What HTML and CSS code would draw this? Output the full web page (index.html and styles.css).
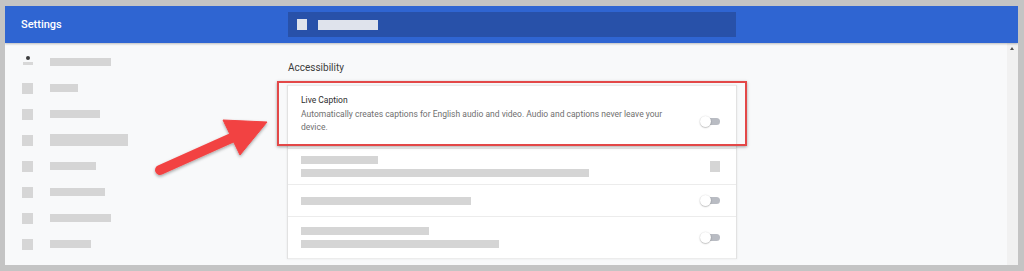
FILE: index.html
```html
<!DOCTYPE html>
<html>
<head>
<meta charset="utf-8">
<link rel="stylesheet" href="styles.css">
</head>
<body>
<div class="app">
  <header class="topbar">
    <div class="brand">Settings</div>
    <div class="search">
      <span class="search-icon"></span>
      <span class="search-ph"></span>
    </div>
  </header>
  <div class="body">
    <div class="content">
      <nav class="sidebar">
        <div class="nav-row"><span class="nav-icon person"><span class="head"></span><span class="shoulders"></span></span><span class="bar" style="width:61px"></span></div>
        <div class="nav-row"><span class="nav-icon"></span><span class="bar" style="width:28px"></span></div>
        <div class="nav-row"><span class="nav-icon"></span><span class="bar" style="width:50px"></span></div>
        <div class="nav-row"><span class="nav-icon"></span><span class="bar tall" style="width:78px"></span></div>
        <div class="nav-row"><span class="nav-icon"></span><span class="bar" style="width:46px"></span></div>
        <div class="nav-row"><span class="nav-icon"></span><span class="bar" style="width:55px"></span></div>
        <div class="nav-row"><span class="nav-icon"></span><span class="bar" style="width:61px"></span></div>
        <div class="nav-row"><span class="nav-icon"></span><span class="bar" style="width:41px"></span></div>
      </nav>
      <main class="main">
        <h2 class="section-title">Accessibility</h2>
        <div class="card">
          <div class="row row-caption">
            <div class="row-text">
              <div class="row-title">Live Caption</div>
              <div class="row-desc">Automatically creates captions for English audio and video. Audio and captions never leave your device.</div>
            </div>
            <span class="toggle"><span class="knob"></span></span>
          </div>
          <div class="row row-2">
            <div class="bars">
              <span class="bar" style="width:77px"></span>
              <span class="bar" style="width:288px"></span>
            </div>
            <span class="square"></span>
          </div>
          <div class="row row-3">
            <div class="bars">
              <span class="bar" style="width:170px"></span>
            </div>
            <span class="toggle"><span class="knob"></span></span>
          </div>
          <div class="row row-4">
            <div class="bars">
              <span class="bar" style="width:128px"></span>
              <span class="bar" style="width:198px"></span>
            </div>
            <span class="toggle"><span class="knob"></span></span>
          </div>
        </div>
      </main>
    </div>
    <div class="scrollbar"><span class="scroll-arrow"></span></div>
  </div>
  <div class="highlight"></div>
  <svg class="arrow" width="140" height="96" viewBox="0 0 140 96">
    <defs>
      <filter id="sh" x="-20%" y="-20%" width="140%" height="140%">
        <feDropShadow dx="0" dy="1.5" stdDeviation="1.5" flood-color="#000" flood-opacity="0.35"/>
      </filter>
    </defs>
    <g filter="url(#sh)" fill="#f24343" stroke="#f24343">
      <line x1="20" y1="70" x2="96" y2="36" stroke-width="10" stroke-linecap="round"/>
      <polygon points="83,20 127,22 100,55" stroke-width="1" stroke-linejoin="round"/>
    </g>
  </svg>
</div>
</body>
</html>
```

FILE: styles.css
```css
html, body {
  margin: 0;
  padding: 0;
}
body {
  background: #c4c4c4;
  font-family: Roboto, "Noto Sans", "Liberation Sans", sans-serif;
  width: 1024px;
  height: 271px;
  overflow: hidden;
}
.app {
  position: relative;
  margin: 6px 6px 0 5px;
  width: 1013px;
  height: 259px;
  display: flex;
  flex-direction: column;
  background: #f8f9fa;
  overflow: hidden;
}
.topbar {
  height: 37px;
  flex: none;
  background: #2f65d2;
  display: flex;
  align-items: center;
  box-shadow: 0 1px 2px rgba(0,0,0,0.25);
  position: relative;
  z-index: 1;
}
.brand {
  width: 266px;
  padding-left: 16px;
  color: #fff;
  font-size: 11px;
  font-weight: 500;
}
.search {
  width: 448px;
  height: 25px;
  margin-left: 1px;
  background: #2851a9;
  display: flex;
  align-items: center;
  padding-left: 9px;
  box-sizing: border-box;
  gap: 11px;
}
.search-icon {
  width: 10px;
  height: 11px;
  background: #dfe3ec;
}
.search-ph {
  width: 60px;
  height: 10px;
  background: #dfe3ec;
}
.body {
  flex: 1;
  display: flex;
}
.content {
  flex: 1;
  display: flex;
}
.sidebar {
  width: 282px;
  padding-top: 6px;
  padding-left: 17px;
  box-sizing: border-box;
}
.nav-row {
  height: 26px;
  display: flex;
  align-items: center;
  gap: 17px;
}
.nav-icon {
  width: 11px;
  height: 11px;
  background: #d6d6d6;
  flex: none;
}
.nav-icon.person {
  background: transparent;
  display: flex;
  flex-direction: column;
  align-items: center;
  justify-content: space-between;
  height: 9px;
  margin-top: -4px;
}
.nav-icon.person .head {
  width: 4px;
  height: 4px;
  border-radius: 50%;
  background: #3c3c3c;
}
.nav-icon.person .shoulders {
  width: 10px;
  height: 3px;
  background: #d8d8d8;
}
.bar {
  display: block;
  height: 8px;
  background: #d5d5d5;
}
.bar.tall {
  height: 12px;
}
.main {
  width: 450px;
}
.section-title {
  margin: 0;
  padding: 17px 0 0 1px;
  height: 16px;
  line-height: 16px;
  font-size: 10px;
  font-weight: 400;
  color: #3c3c3c;
  margin-bottom: 9px;
}
.card {
  background: #fff;
  border-left: 1px solid #e2e2e2;
  border-right: 1px solid #e2e2e2;
  box-shadow: 0 0 2px rgba(0,0,0,0.08);
}
.row {
  display: flex;
  align-items: center;
  padding: 0 16px 0 13px;
  border-top: 1px solid #ececec;
  box-sizing: border-box;
}
.row-caption {
  border-top: 1px solid #ececec;
  height: 63px;
  align-items: flex-start;
  padding-top: 8px;
}
.row-text {
  width: 380px;
}
.row-title {
  font-size: 8.5px;
  line-height: 13.5px;
  color: #2e2e2e;
}
.row-desc {
  font-size: 8.5px;
  line-height: 13.5px;
  color: #6f6f6f;
}
.row-caption .toggle {
  margin-top: 22px;
  margin-left: auto;
}
.row-2 {
  height: 36px;
}
.row-3 {
  height: 32px;
}
.row-4 {
  height: 43px;
  border-bottom: 1px solid #ececec;
}
.bars {
  display: flex;
  flex-direction: column;
  gap: 5px;
}
.square {
  margin-left: auto;
  width: 10px;
  height: 11px;
  background: #d5d5d5;
  margin-right: 0;
}
.toggle {
  margin-left: auto;
  position: relative;
  width: 20px;
  height: 11px;
  flex: none;
}
.toggle::before {
  content: "";
  position: absolute;
  left: 5px;
  right: 0;
  top: 2px;
  height: 7px;
  border-radius: 4px;
  background: #b9bcc3;
}
.knob {
  position: absolute;
  left: 0;
  top: 0;
  width: 11px;
  height: 11px;
  border-radius: 50%;
  background: #fff;
  box-shadow: 0 0.5px 1.5px rgba(0,0,0,0.4);
}
.scrollbar {
  width: 11px;
  background: #f1f1f1;
  position: relative;
}
.scroll-arrow {
  position: absolute;
  left: 3px;
  top: 4px;
  width: 0;
  height: 0;
  border-left: 2.5px solid transparent;
  border-right: 2.5px solid transparent;
  border-bottom: 3px solid #505050;
}
.highlight {
  position: absolute;
  left: 272px;
  top: 75px;
  width: 470px;
  height: 65px;
  box-sizing: border-box;
  border: 2px solid #e34848;
  box-shadow: 0 1px 3px rgba(0,0,0,0.35);
  z-index: 2;
}
.arrow {
  position: absolute;
  left: 135px;
  top: 94px;
  z-index: 3;
}
```
